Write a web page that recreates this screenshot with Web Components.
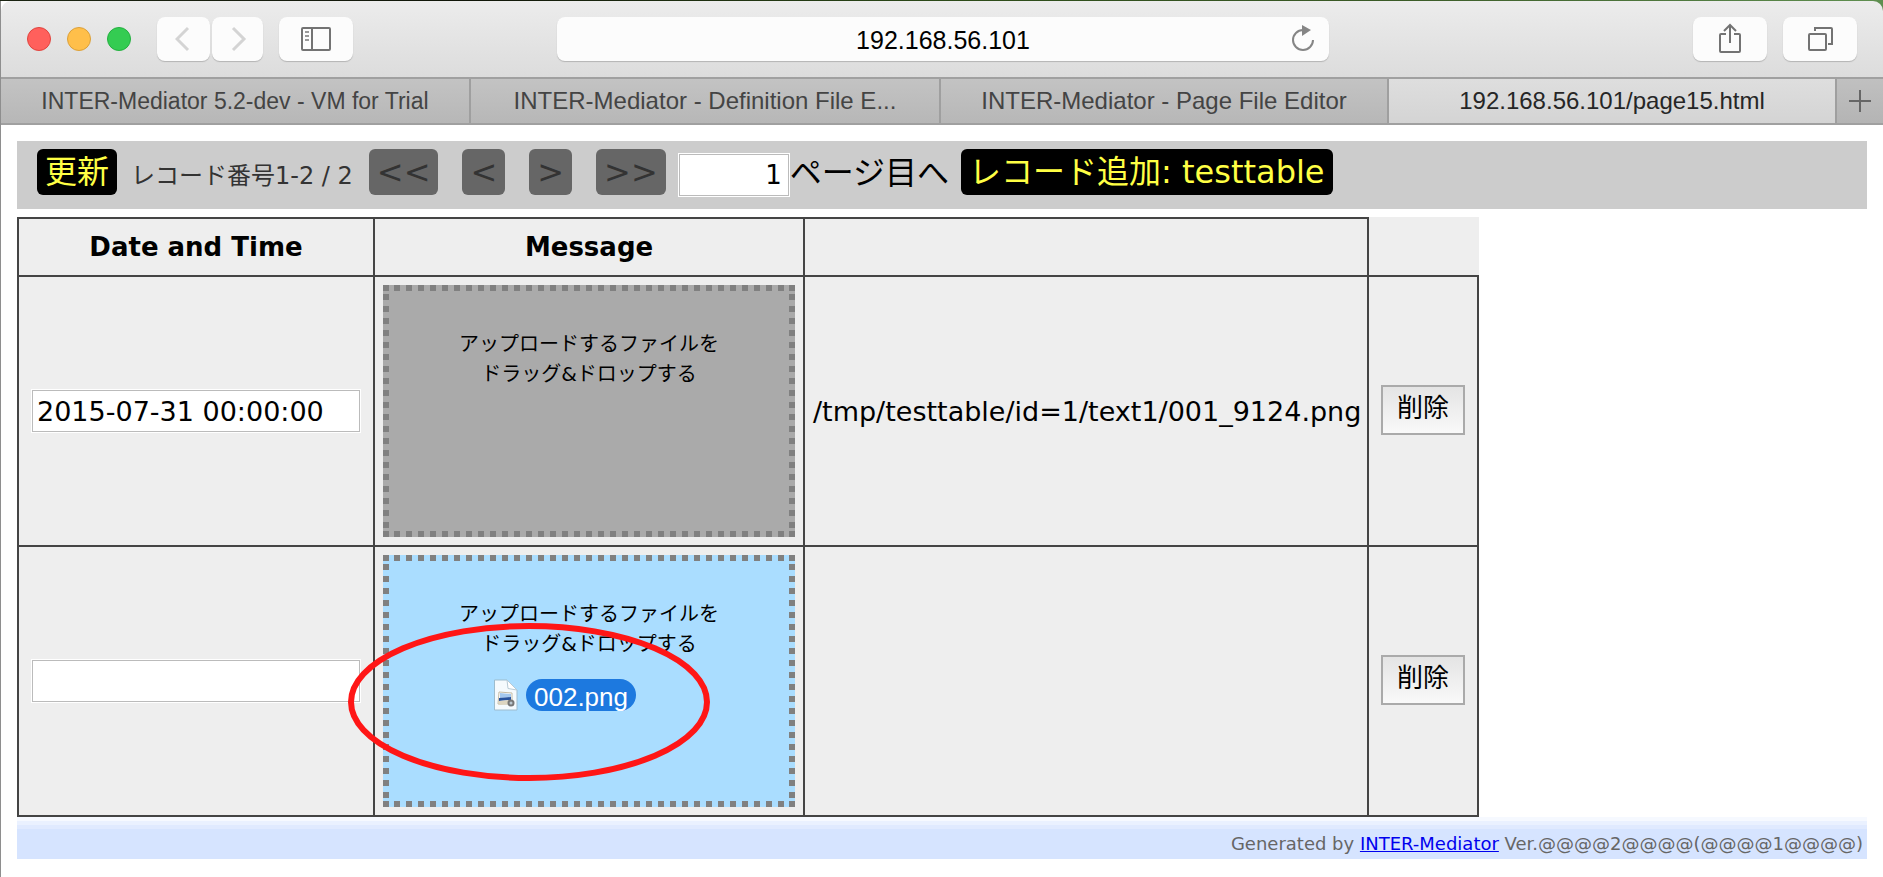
<!DOCTYPE html>
<html lang="ja">
<head>
<meta charset="utf-8">
<title>192.168.56.101/page15.html</title>
<style>
  html { background: #fff; }
  body {
    margin: 0;
    background: linear-gradient(90deg, #1b2412, #101508 25%, #2c4a18 50%, #3c5c28 75%, #5f8f50) 0 0 / 100% 1px no-repeat,
      linear-gradient(#5f8f50, #5f8f50) 100% 0 / 16px 12px no-repeat, #fff;
    font-family: "DejaVu Sans", "Noto Sans CJK JP", sans-serif;
  }
</style>
</head>
<body>
<browser-window>
  <browser-toolbar slot="toolbar"></browser-toolbar>
  <browser-tab slot="tabs" class="long">INTER-Mediator 5.2-dev - VM for Trial</browser-tab>
  <browser-tab slot="tabs">INTER-Mediator - Definition File E...</browser-tab>
  <browser-tab slot="tabs" class="narrow">INTER-Mediator - Page File Editor</browser-tab>
  <browser-tab slot="tabs" class="narrow" current>192.168.56.101/page15.html</browser-tab>
  <im-navigation></im-navigation>
  <im-records></im-records>
  <im-credit></im-credit>
</browser-window>

<script>
const component = (name, html) => {
  const template = document.createElement('template');
  template.innerHTML = html;
  customElements.define(name, class extends HTMLElement {
    constructor() {
      super();
      this.attachShadow({ mode: 'open' }).append(template.content.cloneNode(true));
    }
  });
};

component('tool-button', `
<style>
  :host { display: block; flex: none; width: 74px; height: 44px; }
  button { display: flex; align-items: center; justify-content: center; width: 100%; height: 100%; margin: 0; padding: 0;
    border: 0; border-radius: 8px; background: #fcfcfc; box-shadow: 0 1px 1px #b4b4b4; }
</style>
<button type="button"><slot></slot></button>`);

component('browser-toolbar', `
<style>
  :host { display: flex; align-items: center; height: 76px; padding: 0 26px; box-sizing: border-box;
    background: linear-gradient(#ececec, #dcdcdc); border-radius: 10px 10px 0 0; }
  .lights { display: flex; gap: 16px; margin-right: 26px; }
  .lights i { box-sizing: border-box; width: 24px; height: 24px; border-radius: 50%; border: 1px solid #e0443e; background: #ff605c; }
  .lights i:nth-child(2) { border-color: #dba03a; background: #ffbf4a; }
  .lights i:nth-child(3) { border-color: #24b040; background: #34cc52; }
  .history { display: flex; gap: 2px; margin-right: 16px; }
  .back { width: 53px; } .forward { width: 51px; }
  .center { flex: 1; display: flex; margin: 0 364px 0 204px; }
  .address { display: flex; align-items: center; flex: 1; max-width: 772px; height: 44px; margin: 0 auto; box-sizing: border-box;
    padding: 0 14px 0 38px; border-radius: 8px; background: #fcfcfc; box-shadow: 0 1px 1px #b4b4b4; }
  input { flex: 1; min-width: 0; border: 0; padding: 2px 0 0; background: none; text-align: center; color: #000;
    font: 25px/30px "Liberation Sans", sans-serif; }
  .reload { border: 0; padding: 0; background: none; width: 24px; height: 28px; }
  .actions { display: flex; gap: 16px; }
  svg { display: block; fill: none; stroke: #737373; stroke-width: 2; }
  .history svg { stroke: #d4d4d4; stroke-width: 3; }
</style>
<div class="lights"><i></i><i></i><i></i></div>
<div class="history">
  <tool-button class="back"><svg width="18" height="26"><path d="M13 2 2 13 13 24"/></svg></tool-button>
  <tool-button class="forward"><svg width="18" height="26"><path d="M4 2 15 13 4 24"/></svg></tool-button>
</div>
<tool-button><svg width="30" height="24"><rect x="1" y="1" width="28" height="22" rx="1"/><path d="M11 1v22"/><path stroke="#999" d="M4 5h4M4 9h4M4 13h4"/></svg></tool-button>
<div class="center"><div class="address">
  <input type="text" value="192.168.56.101" aria-label="Address">
  <button class="reload" type="button" aria-label="Reload"><svg width="24" height="28" viewBox="0 0 24 28"><path stroke="#858585" d="M12 5A10 10 0 1 0 22 15"/><path d="M11 0v11l9-6z" fill="#858585" stroke="none"/></svg></button>
</div></div>
<div class="actions">
  <tool-button><svg width="24" height="32" viewBox="0 0 24 32"><path d="M8 11H3Q2 11 2 12V28Q2 29 3 29H21Q22 29 22 28V12Q22 11 21 11H16M12 20V2M6 8 12 2 18 8"/></svg></tool-button>
  <tool-button><svg width="26" height="24" viewBox="0 0 26 24"><rect x="2" y="7" width="17" height="16" rx="1"/><path d="M8 4V1H24Q25 1 25 2V17H21"/></svg></tool-button>
</div>`);

component('browser-tab', `
<style>
  :host { display: block; flex: 468 1 0; min-width: 0; border-right: 2px solid #9f9f9f; background: linear-gradient(#c3c3c3, #b7b7b7); color: #444; font-size: 24px; }
  :host(.long) { font-size: 23px; }
  :host(.narrow) { flex-grow: 446; }
  :host([current]) { background: linear-gradient(#dedede, #d4d4d4); color: #262626; }
  a { display: block; font-family: "Liberation Sans", sans-serif; line-height: 44px; text-align: center; color: inherit; text-decoration: none; white-space: nowrap; }
</style>
<a href="#"><slot></slot></a>`);

component('browser-window', `
<style>
  :host { display: block; margin-top: 1px; border-left: 1px solid #8e8e8e; }
  nav { display: flex; height: 44px; border: solid #a0a0a0; border-width: 2px 0; }
  .add { flex: none; width: 46px; border: 0; padding: 0; background: linear-gradient(#c0c0c0, #b4b4b4); display: grid; place-items: center; }
  main { padding: 16px 16px 18px; }
</style>
<slot name="toolbar"></slot>
<nav><slot name="tabs"></slot><button class="add" type="button" aria-label="New tab"><svg width="22" height="22" stroke="#666" stroke-width="2"><path d="M11 0v22M0 11h22"/></svg></button></nav>
<main><slot></slot></main>`);

component('nav-button', `
<style>
  :host { display: block; flex: none; }
  button { display: block; height: 46px; margin: 0; padding: 0 8px; border: 0; border-radius: 6px; background: #000; color: #ff4;
    font: 32px/46px "DejaVu Sans", "Noto Sans CJK JP", sans-serif; white-space: nowrap; }
  :host([disabled]) button { background: #666; color: #333; }
</style>
<button type="button"><slot></slot></button>`);

component('im-navigation', `
<style>
  :host { display: flex; align-items: flex-start; height: 68px; box-sizing: border-box; padding: 8px 20px; margin-bottom: 8px; background: #ccc; }
  .info { margin: 0 16px 0 14px; font-size: 24px; line-height: 54px; color: #333; white-space: nowrap; }
  .steps { display: flex; gap: 24px; margin-right: 12px; }
  input { box-sizing: border-box; width: 110px; height: 42px; margin: 5px 1px 0; padding: 0 6px; border: 1px solid #bbb; outline: 1px solid #fff;
    font: 26px "DejaVu Sans", sans-serif; text-align: right; }
  label { margin-right: 12px; font-size: 32px; line-height: 48px; white-space: nowrap; }
</style>
<nav-button>更新</nav-button>
<span class="info">レコード番号1-2 / 2</span>
<div class="steps"><nav-button disabled>&lt;&lt;</nav-button><nav-button disabled>&lt;</nav-button><nav-button disabled>&gt;</nav-button><nav-button disabled>&gt;&gt;</nav-button></div>
<input id="page" type="text" value="1"><label for="page">ページ目へ</label>
<nav-button>レコード追加: testtable</nav-button>`);

component('drop-zone', `
<style>
  :host { display: block; position: relative; height: 252px; box-sizing: border-box; padding-top: 44px; text-align: center;
    font-size: 20px; line-height: 30px; --g: #808080; --c: linear-gradient(var(--g), var(--g));
    --h: repeating-linear-gradient(90deg, var(--g) 0 6px, transparent 6px 12px); --v: repeating-linear-gradient(var(--g) 0 6px, transparent 6px 12px);
    background: var(--c) 0 0 / 6px 6px, var(--c) 100% 0 / 6px 6px, var(--c) 0 100% / 6px 6px, var(--c) 100% 100% / 6px 6px,
      var(--h) -1px 0 / 432px 6px, var(--h) -1px 100% / 432px 6px, var(--v) 0 -3px / 6px 264px, var(--v) 100% -3px / 6px 264px;
    background-repeat: no-repeat; background-color: #aaa; }
  :host([active]) { background-color: #adf; }
</style>
アップロードするファイルを<br>ドラッグ&amp;ドロップする<slot></slot>`);

component('dragged-file', `
<style>
  :host { position: absolute; left: 110px; top: 124px; display: flex; align-items: center; gap: 8px; }
  span { height: 32px; padding: 0 8px; border-radius: 16px; background: #1d79df; color: #fff; font: 26px/36px "Liberation Sans", sans-serif; }
</style>
<svg width="25" height="32" viewBox="0 0 25 32"><path d="M1.500 1H14L24 11V31H1.500Z" fill="#f5fafd" stroke="#9dbccd"/><path d="M14 1 15 9.500 24 11Z" fill="#fff" stroke="#b7cad5"/><path d="M6 13 19 14V25H5Z" fill="#fff" stroke="#c4bba4"/><path d="M7 14 18 15V18L7 19Z" fill="#a4c8ee"/><path d="M6 19 18 18V21L6 22Z" fill="#28549f"/><path d="M6 22 18 21V25L6 26Z" fill="#ddd5c0"/><circle cx="18" cy="24" r="3.500" fill="#777"/><circle cx="18" cy="24" r="1.500" fill="#bcc8d0"/></svg>
<span><slot></slot></span>`);

component('red-ring', `
<style>
  :host { position: absolute; left: -35px; top: 68px; pointer-events: none; z-index: 1; }
  svg { display: block; }
</style>
<svg width="362" height="158" fill="none" stroke="#ff1616" stroke-width="6"><ellipse cx="181" cy="79" rx="178" ry="76"/></svg>`);

component('im-records', `
<style>
  :host { display: block; }
  table { border-collapse: collapse; table-layout: fixed; width: 1462px; background: #eee; font-size: 27px; }
  th, td { border: 2px solid #444; padding: 8px; }
  th { height: 40px; font-size: 26px; font-weight: bold; line-height: 30px; }
  th.none { border-top: 0; border-right: 0; }
  td { height: 252px; white-space: nowrap; }
  input { display: block; box-sizing: border-box; width: 328px; height: 42px; margin: 0 auto; padding: 0 4px; border: 1px solid #bbb; outline: 1px solid #fff;
    font: 27px "DejaVu Sans", sans-serif; }
  td button { display: block; box-sizing: border-box; width: 84px; height: 50px; margin: 0 auto 2px; padding: 0 0 8px; border: 2px solid #aaa;
    background: linear-gradient(#e4e4e4, #f9f9f9); font: 26px/38px "Noto Sans CJK JP", sans-serif; color: #000; }
</style>
<table>
  <colgroup><col style="width:356px"><col style="width:430px"><col style="width:564px"><col style="width:110px"></colgroup>
  <thead><tr><th>Date and Time</th><th>Message</th><th></th><th class="none"></th></tr></thead>
  <tbody>
    <tr><td><input type="text" value="2015-07-31 00:00:00" aria-label="Date and Time"></td><td><drop-zone></drop-zone></td>
      <td>/tmp/testtable/id=1/text1/001_9124.png</td><td><button type="button">削除</button></td></tr>
    <tr><td><input type="text" value="" aria-label="Date and Time"></td><td><drop-zone active><dragged-file>002.png</dragged-file><red-ring></red-ring></drop-zone></td>
      <td></td><td><button type="button">削除</button></td></tr>
  </tbody>
</table>`);

component('im-credit', `
<style>
  :host { display: block; height: 42px; box-sizing: border-box; padding: 12px 4px 0 0; text-align: right; color: #666; font-size: 18px; line-height: 30px;
    background: linear-gradient(#f6f9ff 4px, #eaf1ff 4px 8px, #e0eaff 8px 12px, #d6e4ff 12px); }
  a { color: #00e; }
</style>
Generated by <a href="#">INTER-Mediator</a> Ver.@@@@2@@@@(@@@@1@@@@)`);
</script>
</body>
</html>
